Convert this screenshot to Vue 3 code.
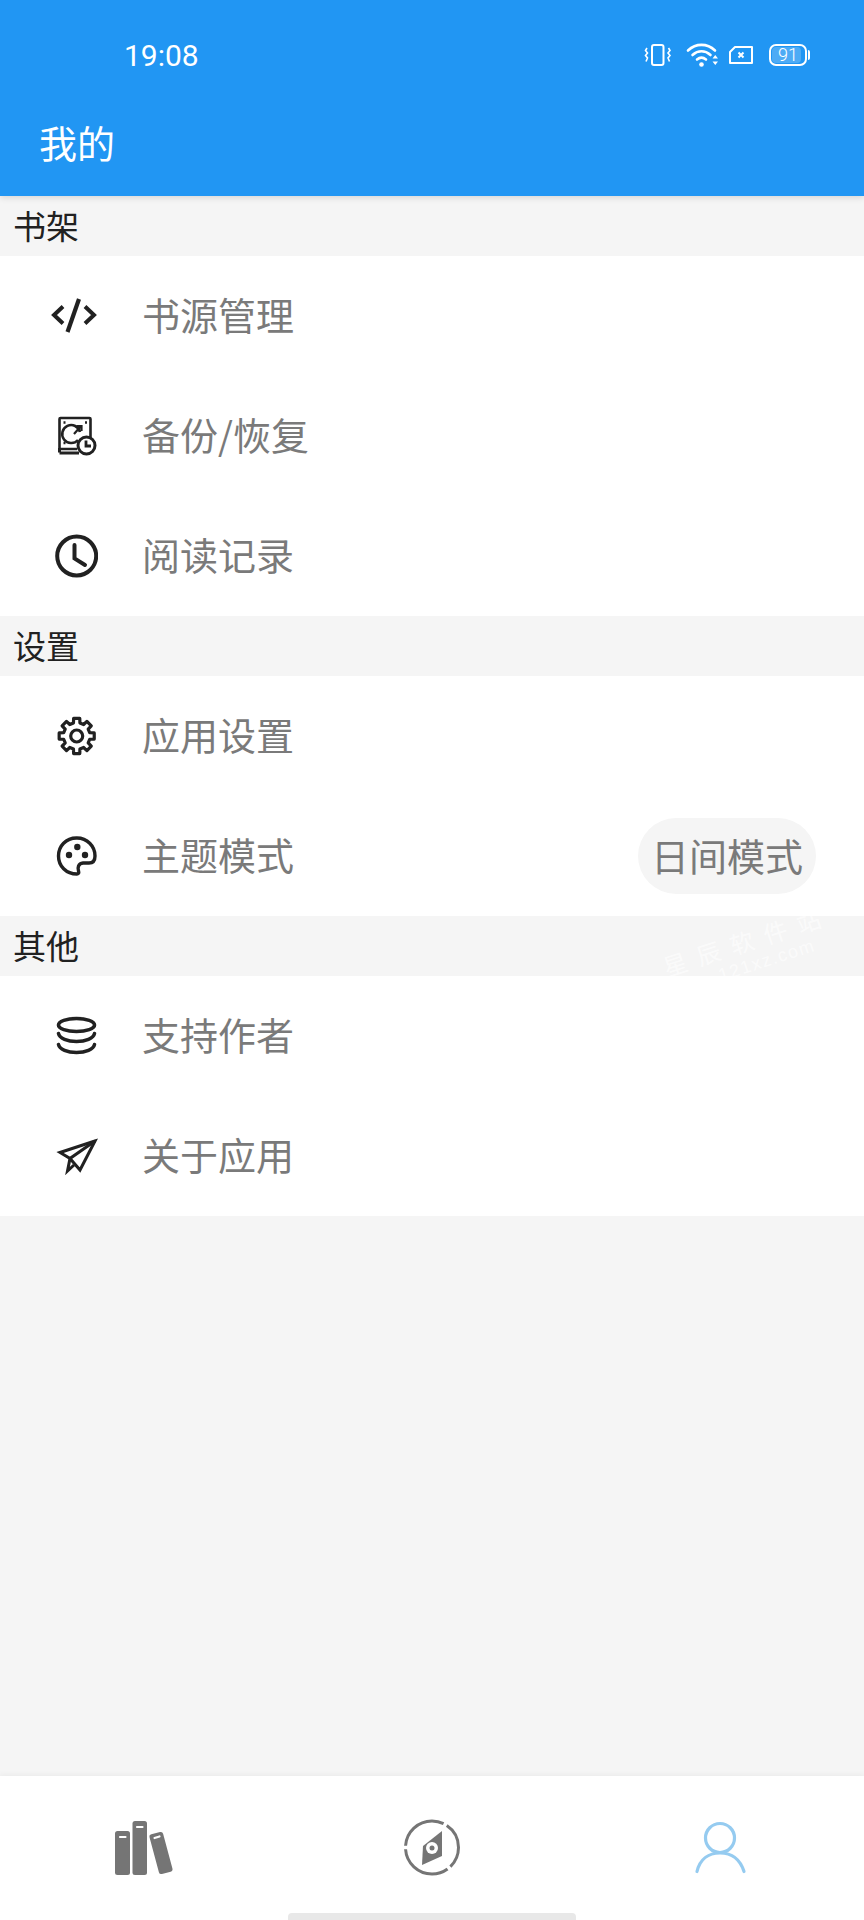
<script setup>
const groups = [
  { title: '书架', items: [
    { icon: 'code', label: '书源管理' },
    { icon: 'backup', label: '备份/恢复' },
    { icon: 'clock', label: '阅读记录' },
  ] },
  { title: '设置', items: [
    { icon: 'gear', label: '应用设置' },
    { icon: 'palette', label: '主题模式', tag: '日间模式' },
  ] },
  { title: '其他', mark: true, items: [
    { icon: 'coins', label: '支持作者' },
    { icon: 'plane', label: '关于应用' },
  ] },
]

// Eight-tooth gear outline around the middle of the icon box
function gearOutline(cx, cy, tip, root) {
  const pts = []
  const at = (deg, r) => {
    const a = (deg * Math.PI) / 180
    return `${(cx + r * Math.cos(a)).toFixed(2)} ${(cy + r * Math.sin(a)).toFixed(2)}`
  }
  for (let i = 0; i < 8; i++) {
    const mid = i * 45 - 90
    pts.push(at(mid - 14, root), at(mid - 10, tip), at(mid + 10, tip), at(mid + 14, root))
  }
  return `M${pts.join('L')}z`
}
const gearPath = gearOutline(26.7, 24, 17.8, 13.4)
</script>

<template>
  <div class="page">
    <header class="header">
      <div class="status">
        <span class="time">19:08</span>
        <div class="status-icons">
          <svg width="30" height="24" viewBox="0 0 30 24" fill="none" stroke="#fff" stroke-width="2">
            <rect x="8" y="2" width="11.500" height="20" rx="2" />
            <path d="M3 5L1.500 7.500l2 2.500-2 2.500 2 2.500L2 18.500M24.500 5L26 7.500 24 10l2 2.500-2 2.500 1.500 3.500" stroke-width="1.600" />
          </svg>
          <svg class="wifi" width="33" height="26" viewBox="0 0 33 26" fill="none" stroke="#fff" stroke-width="2.600" stroke-linecap="round">
            <path d="M2 8.500C10 1 21 1 29 8.500" />
            <path d="M6.500 13C12 8 19 8 24.500 13" />
            <path d="M11 17.500c3-2.500 6-2.500 9 0" />
            <circle cx="15.500" cy="22.500" r="2.300" fill="#fff" stroke="none" />
            <path d="M26.500 16.500h5.500l-2.750-3.500zM26.500 19.500h5.500l-2.750 3.500z" fill="#fff" stroke="none" />
          </svg>
          <svg width="29" height="20" viewBox="0 0 29 20" fill="none" stroke="#fff" stroke-width="2">
            <path d="M7 2h17v16H2V7z" stroke-linejoin="round" />
            <path d="M10.500 7.500l5 5M15.500 7.500l-5 5" />
          </svg>
          <div class="battery">
            <span class="battery-fill"></span>
            <span class="battery-text">91</span>
          </div>
        </div>
      </div>
      <h1 class="title">我的</h1>
    </header>

    <main class="content">
      <section v-for="group in groups" :key="group.title">
        <div class="group-title">
          {{ group.title }}
          <div v-if="group.mark" class="mark">
            <span class="mark-name">星辰软件站</span>
            <span class="mark-url">121xz.com</span>
          </div>
        </div>
        <div class="row" v-for="item in group.items" :key="item.label">
          <span class="row-icon">
            <svg v-if="item.icon === 'code'" width="48" height="48" viewBox="0 0 48 48" fill="none" stroke="#212121" stroke-width="4">
              <path d="M13 14.500L4 23l9 8.500M35 14.500l9 8.500-9 8.500" />
              <path d="M29 7l-11.500 33" stroke-width="4.200" />
            </svg>
            <svg v-else-if="item.icon === 'backup'" width="48" height="48" viewBox="0 0 48 48" fill="none" stroke="#212121" stroke-width="2.600">
              <path d="M27 37H9.500V7a1 1 0 0 1 1-1h29a1 1 0 0 1 1 1v19" />
              <path d="M9.500 40.500V36M9.500 41h19.500" stroke-width="3" />
              <path d="M30 20a9 9 0 1 0-2 8" />
              <path d="M24 22l7-8M26.500 14h5v5" stroke-width="2.200" />
              <path d="M13.500 10.500h2M35 10.500h2M13.500 31h2" stroke-width="2.400" />
              <circle cx="36.500" cy="33.500" r="8.500" fill="#fff" stroke-width="3" />
              <path d="M36 28.500v5.500h5" stroke-width="2.800" />
            </svg>
            <svg v-else-if="item.icon === 'clock'" width="48" height="48" viewBox="0 0 48 48" fill="none" stroke="#212121" stroke-width="4">
              <circle cx="26.700" cy="24" r="19.500" />
              <path d="M24.500 13v13.500L35 33" stroke-linecap="round" />
            </svg>
            <svg v-else-if="item.icon === 'gear'" width="48" height="48" viewBox="0 0 48 48" fill="none" stroke="#212121" stroke-width="3.200" stroke-linejoin="round">
              <path :d="gearPath" />
              <circle cx="26.700" cy="24" r="6" />
            </svg>
            <svg v-else-if="item.icon === 'palette'" width="48" height="48" viewBox="0 0 48 48" fill="none" stroke="#212121" stroke-width="3.400">
              <path d="M26.500 6C16 6 8.500 14 8.500 24S16 42 27 42c2 0 2-1.500 1.500-3-1-3-.500-7.500 4.500-8h6c4 0 6-2.500 6-7 0-10-8-18-18-18z" stroke-linejoin="round" />
              <circle cx="19" cy="23" r="3.200" fill="#212121" stroke="none" />
              <circle cx="27.300" cy="15" r="3.200" fill="#212121" stroke="none" />
              <circle cx="35" cy="23" r="3.200" fill="#212121" stroke="none" />
            </svg>
            <svg v-else-if="item.icon === 'coins'" width="48" height="48" viewBox="0 0 48 48" fill="none" stroke="#212121" stroke-width="3.600" stroke-linecap="round">
              <ellipse cx="26.500" cy="13" rx="18" ry="6.500" />
              <path d="M8.500 21.500c1 5 9 8 18 8s17-3 18-8" />
              <path d="M8.500 32.500c1 5 9 8 18 8s17-3 18-8" />
            </svg>
            <svg v-else width="48" height="48" viewBox="0 0 48 48" fill="none" stroke="#212121" stroke-width="3" stroke-linejoin="miter">
              <path d="M45 9L10 20.500l10 6L30 38z" />
              <path d="M45 9L20 26.500l-2.500 12.500 6.500-6" />
            </svg>
          </span>
          <span class="row-label">{{ item.label }}</span>
          <span v-if="item.tag" class="tag">{{ item.tag }}</span>
        </div>
      </section>
    </main>

    <nav class="tabbar">
      <div class="tab">
        <svg width="60" height="60" viewBox="0 0 60 60">
          <rect x="1" y="13" width="15" height="44" rx="2.500" fill="#757575" />
          <rect x="18.500" y="3" width="14.500" height="54" rx="2.500" fill="#757575" />
          <rect x="40" y="14.500" width="14" height="41" rx="2.500" fill="#757575" transform="rotate(-15 47 35)" />
          <path d="M6 19h5.500M23 9h5.500M40.500 20l5-1.500" stroke="#fff" stroke-width="2.200" stroke-linecap="round" />
        </svg>
      </div>
      <div class="tab">
        <svg width="60" height="60" viewBox="0 0 60 60" fill="none">
          <circle cx="30" cy="29.500" r="26.500" stroke="#757575" stroke-width="3" pathLength="360" stroke-dasharray="122 8 112 8 102 8" stroke-dashoffset="-54" />
          <path d="M40 13v25l-20 9 1-19z" fill="#757575" />
          <circle cx="30" cy="30" r="6" fill="#fff" />
          <circle cx="30" cy="30" r="2.500" fill="#757575" />
        </svg>
      </div>
      <div class="tab">
        <svg width="60" height="60" viewBox="0 0 60 60" fill="none" stroke="#95cbf0" stroke-width="3.200" stroke-linecap="round">
          <circle cx="30" cy="20" r="14.500" />
          <path d="M7 53.500C10 41 19 35 30 35s20 6 24 18.500" />
        </svg>
      </div>
    </nav>
    <div class="home-bar"></div>
  </div>
</template>

<style>
html, body { margin: 0; padding: 0; background: #f5f5f5; }
</style>

<style scoped>
.page {
  position: relative;
  width: 864px;
  height: 1920px;
  display: flex;
  flex-direction: column;
  background: #f5f5f5;
  overflow: hidden;
  font-family: "Noto Sans CJK SC", "Noto Sans", sans-serif;
}
.header {
  height: 196px;
  flex: none;
  background: #2196f3;
  color: #fff;
  box-shadow: 0 2px 6px rgba(0, 0, 0, 0.12);
  position: relative;
  z-index: 1;
}
.status {
  height: 110px;
  display: flex;
  align-items: center;
  justify-content: space-between;
  padding: 0 57px 0 124px;
}
.time {
  font-family: Roboto, sans-serif;
  font-size: 30px;
  font-weight: 400;
}
.status-icons {
  display: flex;
  align-items: center;
  gap: 12px;
}
.wifi {
  margin-right: -3px;
}
.battery {
  position: relative;
  width: 38px;
  height: 22px;
  box-sizing: border-box;
  border: 2px solid #fff;
  border-radius: 7px;
  display: flex;
  align-items: center;
  justify-content: center;
}
.battery::after {
  content: "";
  position: absolute;
  right: -5px;
  top: 4px;
  width: 2px;
  height: 10px;
  background: #fff;
  border-radius: 0 2px 2px 0;
}
.battery-fill {
  position: absolute;
  inset: 1px 4px 1px 1px;
  background: rgba(255, 255, 255, 0.2);
  border-radius: 4px;
}
.battery-text {
  position: relative;
  font-family: Roboto, sans-serif;
  font-size: 18px;
  line-height: 18px;
  font-weight: 300;
}
.title {
  margin: 7px 0 0;
  padding-left: 39px;
  font-size: 38px;
  font-weight: 400;
  line-height: 50px;
}
.group-title {
  position: relative;
  height: 60px;
  padding-left: 13px;
  font-size: 33px;
  line-height: 58px;
  color: #212121;
  overflow: hidden;
}
.mark {
  position: absolute;
  left: 660px;
  top: 40px;
  transform-origin: 0 0;
  transform: rotate(-18deg);
  display: flex;
  flex-direction: column;
  white-space: nowrap;
  color: rgba(255, 255, 255, 0.6);
  line-height: 1;
}
.mark-name {
  font-size: 24px;
  letter-spacing: 11px;
}
.mark-url {
  font-family: "Liberation Sans", sans-serif;
  font-size: 18px;
  letter-spacing: 1.500px;
  margin: 4px 0 0 50px;
}
.row {
  height: 120px;
  background: #fff;
  display: flex;
  align-items: center;
  padding-right: 48px;
}
.row-icon {
  width: 142px;
  flex: none;
  display: flex;
  padding-left: 50px;
  box-sizing: border-box;
}
.row-label {
  font-size: 38px;
  color: #7a7a7a;
  flex: 1;
  padding-bottom: 5px;
}
.tag {
  height: 76px;
  width: 178px;
  flex: none;
  background: #f5f5f5;
  border-radius: 38px;
  text-align: center;
  line-height: 74px;
  font-size: 38px;
  color: #7a7a7a;
}
.content {
  flex: 1;
}
.tabbar {
  height: 144px;
  flex: none;
  background: #fff;
  display: grid;
  grid-template-columns: repeat(3, 1fr);
  box-shadow: 0 -2px 5px rgba(0, 0, 0, 0.04);
}
.tab {
  display: flex;
  justify-content: center;
  padding-top: 42px;
}
.tab svg {
  overflow: visible;
}
.home-bar {
  position: absolute;
  left: 288px;
  bottom: 0;
  width: 288px;
  height: 7px;
  background: #e8e8e8;
  border-radius: 4px 4px 0 0;
}
</style>
